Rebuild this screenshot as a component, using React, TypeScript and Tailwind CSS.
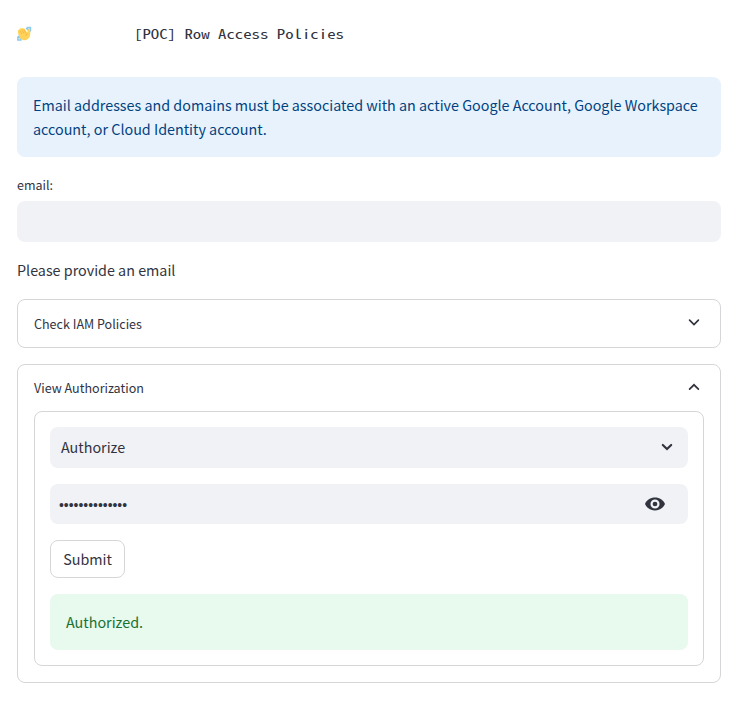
import React from "react";

function Chevron({ up = false }: { up?: boolean }) {
  return (
    <svg viewBox="0 0 20 20" className="h-5 w-5 shrink-0" fill="none" stroke="#31333f" strokeWidth="1.7" strokeLinecap="round">
      <path d={up ? "M5.6 11.2 10 6.8l4.4 4.4" : "M5.6 6.1 10 10.5l4.4-4.4"} />
    </svg>
  );
}

function WavingHand() {
  return (
    <svg viewBox="0 0 16 16" className="h-4 w-4">
      <g fill="none" stroke="#8ccaf0" strokeWidth="1.6" strokeLinecap="round">
        <path d="M10.2 1.6h3.2v3.4M9.6 2.6l2 1.6M.9 11v3h3.2M1.6 10.4l2.4 2.4" />
      </g>
      <path
        d="M1.1 7.6 1 4.8Q1.2 3.6 2.2 3.8L3 2.6q.8-.8 1.6 0 .8-1 1.7-.2 1-.4 1.5.6L10.2 6.4 11 3.7q.6-1 1.6-.3.7.5.7 3.4c0 3.4-.5 5-2.7 6.4-2.6 1.6-5.3 1.1-7.2-.8Q1.9 10.4 1.1 7.6Z"
        fill="#ffd35a"
      />
      <path d="M2.8 4.7 5 8M4.8 3.5l2.2 4M6.8 3.4 8.6 7.2M10.7 7.3Q8.6 8 9.2 10" fill="none" stroke="#eba22f" strokeWidth=".5" />
    </svg>
  );
}

export default function App() {
  return (
    <main className="h-[705px] w-[744px] overflow-hidden bg-white pl-[17px] pr-[23px] font-['Noto_Sans_CJK_SC','Noto_Sans',sans-serif] text-[14.335px] leading-6 text-[#31333f]">
      <header className="flex h-[77px] items-start pt-[22px]">
        <div className="w-[116.5px] pt-1"><WavingHand /></div>
        <h1 className="origin-left scale-x-[1.292] whitespace-pre font-['Noto_Sans_Mono_CJK_SC','Liberation_Mono',monospace] text-[13px] leading-6">[POC] Row Access Policies</h1>
      </header>
      <div className="h-20 rounded-lg bg-[#e8f2fc] p-4 text-[#004280]">
        <p className="whitespace-nowrap">
          Email addresses and domains must be associated with an active Google Account, Google Workspace<br />
          account, or Cloud Identity account.
        </p>
      </div>
      <div className="mt-4 flex h-7 items-center pb-1 text-[12.5px]">email:</div>
      <div className="h-[41px] rounded-lg bg-[#f0f2f6]" />
      <p className="mt-4 h-[41px]">Please provide an email</p>
      <section className="flex h-[49px] items-center justify-between rounded-lg border border-[#d6d6d9] pl-4 pr-4 text-[12.56px]">
        <span>Check IAM Policies</span>
        <Chevron />
      </section>
      <section className="mt-4 h-[319px] rounded-lg border border-[#d6d6d9] px-4">
        <div className="flex h-[46px] items-center justify-between text-[12.56px]">
          <span>View Authorization</span>
          <Chevron up />
        </div>
        <div className="flex h-[255px] flex-col gap-4 rounded-lg border border-[#d6d6d9] p-[15px]">
          <div className="flex h-[41px] shrink-0 items-center justify-between rounded-lg bg-[#f0f2f6] pb-px pl-[11px] pr-[11px]">
            <span>Authorize</span>
            <svg viewBox="0 0 20 20" className="h-5 w-5" fill="none" stroke="#31333f" strokeWidth="2.1" strokeLinecap="round">
              <path d="M5.8 7.9 10 12.1l4.2-4.2" />
            </svg>
          </div>
          <div className="flex h-10 shrink-0 items-center justify-between rounded-lg bg-[#f0f2f6] pl-[9px] pr-[23px]">
            <span className="pt-0.5 font-['Liberation_Sans',sans-serif] text-[13.9px]">••••••••••••••</span>
            <svg viewBox="1 1 22 22" className="h-5 w-5" fill="#31333f">
              <path fillRule="evenodd" d="M12 4.9C7 4.9 2.73 7.8 1 12c1.73 4.2 6 7.1 11 7.1s9.27-2.9 11-7.1c-1.73-4.2-6-7.1-11-7.1ZM12 17a5 5 0 1 1 0-10 5 5 0 0 1 0 10Zm0-7.6a2.6 2.6 0 1 0 0 5.2 2.6 2.6 0 0 0 0-5.2Z" />
            </svg>
          </div>
          <button className="flex h-[38px] w-[75px] shrink-0 items-center justify-center rounded-lg border border-[#d6d6d9]">Submit</button>
          <div className="h-14 shrink-0 rounded-lg bg-[#e8f9ee] p-4 text-[#177233]">Authorized.</div>
        </div>
      </section>
    </main>
  );
}
